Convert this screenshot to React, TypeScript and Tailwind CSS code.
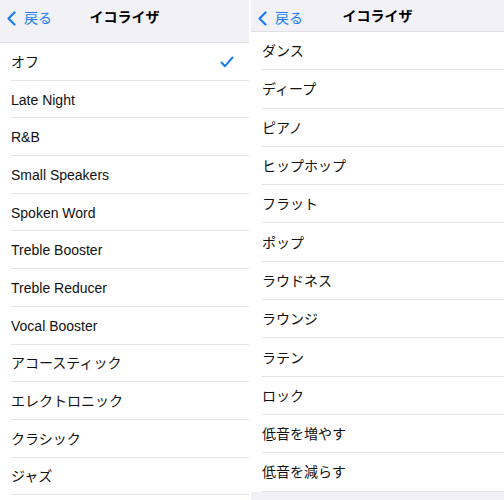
import React from "react";

const leftItems = [
  "オフ",
  "Late Night",
  "R&B",
  "Small Speakers",
  "Spoken Word",
  "Treble Booster",
  "Treble Reducer",
  "Vocal Booster",
  "アコースティック",
  "エレクトロニック",
  "クラシック",
  "ジャズ",
];

const rightItems = [
  "ダンス",
  "ディープ",
  "ピアノ",
  "ヒップホップ",
  "フラット",
  "ポップ",
  "ラウドネス",
  "ラウンジ",
  "ラテン",
  "ロック",
  "低音を増やす",
  "低音を減らす",
];

const Header: React.FC<{ tall?: boolean }> = ({ tall }) => (
  <div
    className={`relative flex items-center justify-center bg-[#f1f1f6] border-b border-[#dedee3] ${
      tall ? "h-[43px] pb-[7px]" : "h-[32px] pt-[2px]"
    }`}
  >
    <div className="absolute left-[7px] top-[10px] flex items-center gap-[8px] text-[#1a7cf5]">
      <svg width="9" height="15" viewBox="0 0 9 15" fill="none">
        <path
          d="M7.5 1.5 L1.5 7.5 L7.5 13.5"
          stroke="#1a7cf5"
          strokeWidth="2.2"
          strokeLinecap="round"
          strokeLinejoin="round"
        />
      </svg>
      <span className="text-[14px] leading-[17px]">戻る</span>
    </div>
    <span className="text-[14px] font-bold text-black">イコライザ</span>
  </div>
);

const Row: React.FC<{ label: string; h: string; checked?: boolean }> = ({
  label,
  h,
  checked,
}) => (
  <div className={`pl-[11px] bg-white ${h}`}>
    <div className="flex h-full items-center justify-between border-b border-[#e6e6ea] pt-[2px] pr-[15px]">
      <span className="text-[14px] text-[#111]">{label}</span>
      {checked && (
        <svg width="14" height="12" viewBox="0 0 14 12" fill="none">
          <path
            d="M1.5 6.5 L5 10.2 L12.5 1.5"
            stroke="#1a7cf5"
            strokeWidth="2"
            strokeLinecap="round"
            strokeLinejoin="round"
          />
        </svg>
      )}
    </div>
  </div>
);

export default function App() {
  return (
    <div
      className="flex h-[500px] w-[504px] gap-[2px] overflow-hidden bg-white"
      style={{ fontFamily: '"Liberation Sans", "Noto Sans CJK JP", sans-serif' }}
    >
      <div className="flex w-[249px] flex-col bg-white">
        <Header tall />
        {leftItems.map((item, i) => (
          <Row key={item} label={item} h="h-[37.7px]" checked={i === 0} />
        ))}
      </div>
      <div className="flex flex-1 flex-col bg-[#f1f1f6]">
        <Header />
        {rightItems.map((item) => (
          <Row key={item} label={item} h="h-[38.3px]" />
        ))}
      </div>
    </div>
  );
}
